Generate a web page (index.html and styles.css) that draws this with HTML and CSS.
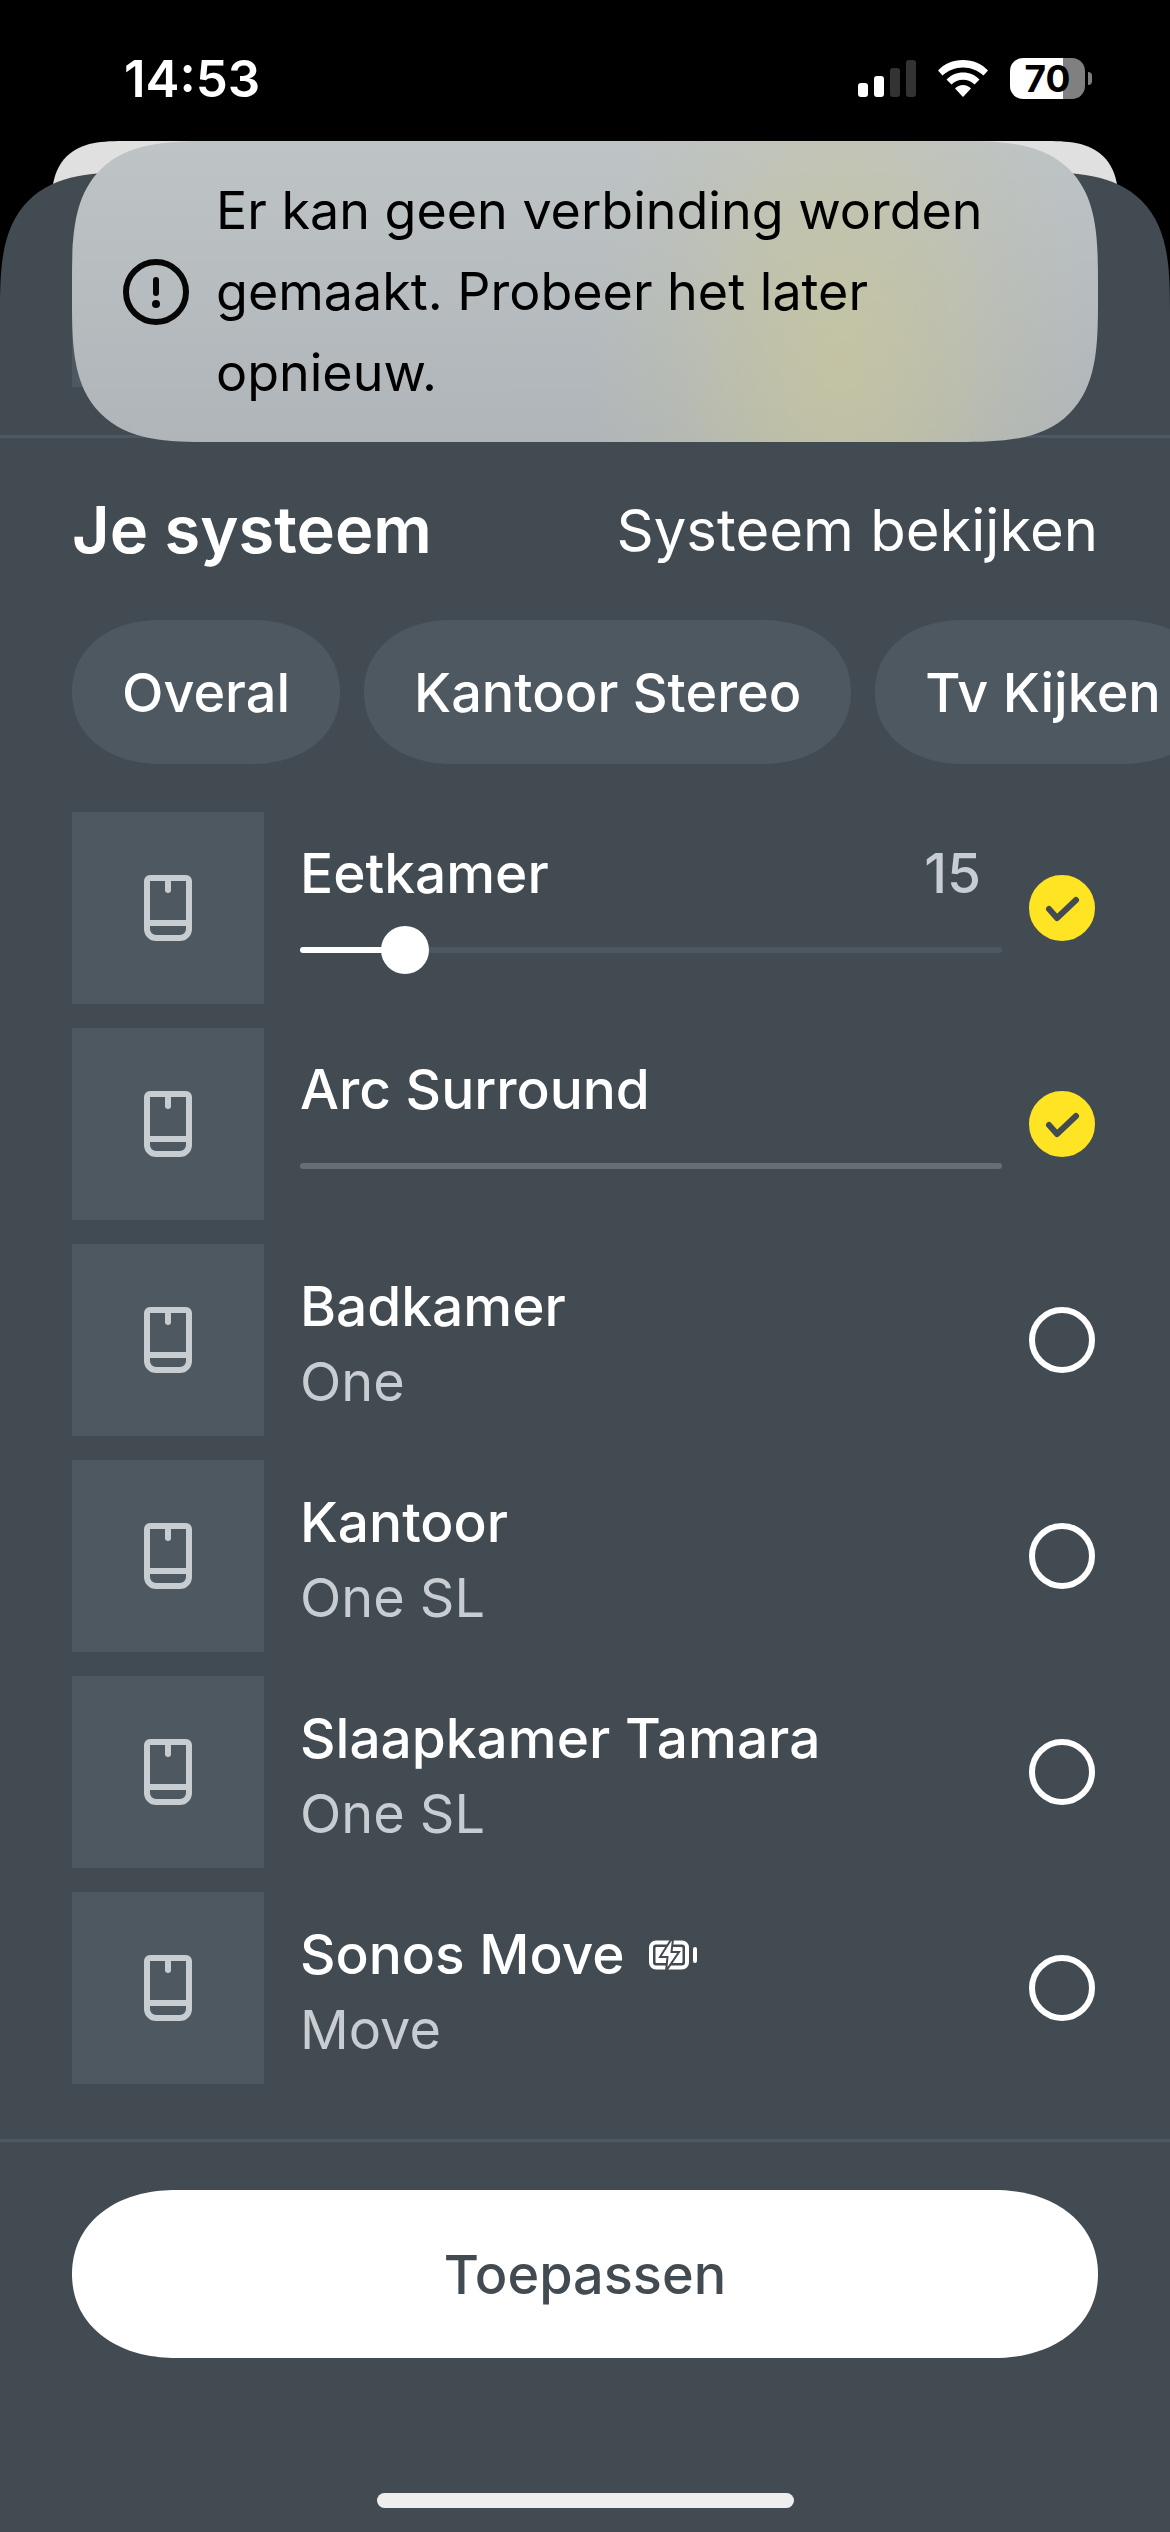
FILE: index.html
```html
<!DOCTYPE html>
<html lang="nl">
<head>
  <meta charset="UTF-8">
  <meta name="viewport" content="width=device-width, initial-scale=1.0">
  <title>Je systeem</title>
  <link rel="stylesheet" href="styles.css">
</head>
<body>
  <!-- shared icons -->
  <svg class="sprite" aria-hidden="true">
    <symbol id="speaker" viewBox="0 0 48 66">
      <path d="M6 3h36a3 3 0 0 1 3 3v48a9 9 0 0 1-9 9H12a9 9 0 0 1-9-9V6a3 3 0 0 1 3-3zM3 48h42" fill="none" stroke="currentColor" stroke-width="6"/>
      <path d="M24 5v10" fill="none" stroke="currentColor" stroke-width="6" stroke-linecap="round"/>
    </symbol>
    <symbol id="check" viewBox="0 0 66 66">
      <path d="M20 34l8 9 19-18" fill="none" stroke="currentColor" stroke-width="6" stroke-linecap="round" stroke-linejoin="round"/>
    </symbol>
  </svg>

  <div class="status-bar">
    <time class="clock">14:53</time>
    <div class="status-icons">
      <svg width="58" height="37" viewBox="0 0 58 37" fill="#fff">
        <rect x="0" y="23" width="10" height="14" rx="3"/>
        <rect x="16" y="16" width="10" height="21" rx="3"/>
        <rect x="32" y="8" width="10" height="29" rx="3" fill="#333"/>
        <rect x="48" y="0" width="10" height="37" rx="3" fill="#333"/>
      </svg>
      <svg width="50" height="37" viewBox="0 0 50 37" fill="#fff">
        <path d="M25 0C35 0 44 4 50 10.500L45.500 15.500C40 10.500 33 7.500 25 7.500S10 10.500 4.500 15.500L0 10.500C6 4 15 0 25 0z"/>
        <path d="M25 12.500C31.500 12.500 37 15 41.500 19.500L36.500 24.500C33.500 21.500 29.500 19.800 25 19.800S16.500 21.500 13.500 24.500L8.500 19.500C13 15 18.500 12.500 25 12.500z"/>
        <path d="M25 25C28 25 31 26.200 33 28.500L25 37L17 28.500C19 26.200 22 25 25 25z"/>
      </svg>
      <div class="battery"><span>70</span></div>
    </div>
  </div>

  <main class="stack">
    <div class="toast" role="alert">
      <svg class="toast-icon" width="66" height="66" viewBox="0 0 66 66" fill="none" stroke="#070707" stroke-width="6" stroke-linecap="round">
        <circle cx="33" cy="33" r="30"/>
        <path d="M33 21v13"/>
        <circle cx="33" cy="45" r="4" fill="#070707" stroke="none"/>
      </svg>
      <p>Er kan geen verbinding worden gemaakt. Probeer het later opnieuw.</p>
    </div>

    <div class="sheet">
      <div class="now-playing">
        <div class="cover"></div>
      </div>

      <section class="system">
        <div class="system-head">
          <h1>Je systeem</h1>
          <a href="#">Systeem bekijken</a>
        </div>

        <div class="chips">
          <button>Overal</button>
          <button>Kantoor Stereo</button>
          <button>Tv Kijken</button>
        </div>

        <ul class="rooms">
          <li class="room">
            <div class="tile"><svg><use href="#speaker"/></svg></div>
            <div class="room-volume">
              <div class="room-line">
                <label class="room-name" for="room-1">Eetkamer</label>
                <span class="level">15</span>
              </div>
              <div class="slider" style="--level: 15%">
                <input type="range" min="0" max="100" value="15" aria-label="Volume Eetkamer">
              </div>
            </div>
            <span class="check"><input type="checkbox" id="room-1" checked><svg><use href="#check"/></svg></span>
          </li>
          <li class="room">
            <div class="tile"><svg><use href="#speaker"/></svg></div>
            <div class="room-volume">
              <div class="room-line">
                <label class="room-name" for="room-2">Arc Surround</label>
              </div>
              <div class="slider off">
                <input type="range" min="0" max="100" value="0" aria-label="Volume Arc Surround" disabled>
              </div>
            </div>
            <span class="check"><input type="checkbox" id="room-2" checked><svg><use href="#check"/></svg></span>
          </li>
          <li class="room">
            <div class="tile"><svg><use href="#speaker"/></svg></div>
            <div class="room-info">
              <label class="room-name" for="room-3">Badkamer</label>
              <span class="model">One</span>
            </div>
            <span class="check"><input type="checkbox" id="room-3"></span>
          </li>
          <li class="room">
            <div class="tile"><svg><use href="#speaker"/></svg></div>
            <div class="room-info">
              <label class="room-name" for="room-4">Kantoor</label>
              <span class="model">One SL</span>
            </div>
            <span class="check"><input type="checkbox" id="room-4"></span>
          </li>
          <li class="room">
            <div class="tile"><svg><use href="#speaker"/></svg></div>
            <div class="room-info">
              <label class="room-name" for="room-5">Slaapkamer Tamara</label>
              <span class="model">One SL</span>
            </div>
            <span class="check"><input type="checkbox" id="room-5"></span>
          </li>
          <li class="room">
            <div class="tile"><svg><use href="#speaker"/></svg></div>
            <div class="room-info">
              <div class="name-line">
                <label class="room-name" for="room-6">Sonos Move</label>
                <svg width="48" height="30" viewBox="0 0 48 30">
                  <rect x="2" y="2.500" width="36" height="25" rx="5" fill="none" stroke="#fff" stroke-width="4"/>
                  <rect x="6" y="6.500" width="28" height="17" rx="1" fill="#fff"/>
                  <rect x="5.500" y="6" width="29" height="18" rx="2" fill="none" stroke="#434b52" stroke-width="2"/>
                  <path d="M22.500-1L11 17h7.500L17 31 30 12h-7.500L24-1z" fill="#fff" stroke="#434b52" stroke-width="2"/>
                  <rect x="44" y="7" width="4" height="16" rx="2" fill="#fff"/>
                </svg>
              </div>
              <span class="model">Move</span>
            </div>
            <span class="check"><input type="checkbox" id="room-6"></span>
          </li>
        </ul>
      </section>

      <footer class="actions">
        <button class="apply">Toepassen</button>
        <div class="home-indicator"></div>
      </footer>
    </div>
  </main>
</body>
</html>
```
FILE: styles.css
```css
* {
  box-sizing: border-box;
}

body {
  margin: 0;
  min-height: 100vh;
  display: flex;
  flex-direction: column;
  background-color: #000;
  color: #fff;
  font-family: Inter, "Liberation Sans", sans-serif;
  font-size: 55px;
  line-height: 75px;
  overflow-x: hidden;
}

h1, p, ul {
  margin: 0;
  padding: 0;
}

button, input {
  -webkit-appearance: none;
  appearance: none;
  margin: 0;
  border: none;
  font: inherit;
}

.sprite {
  display: none;
}

/* status bar */
.status-bar {
  display: flex;
  justify-content: space-between;
  align-items: center;
  height: 141px;
  padding: 15px 78px 0 124px;
}

.clock {
  font-size: 51px;
  font-weight: 600;
}

.status-icons {
  display: flex;
  align-items: center;
  gap: 22px;
}

.battery {
  position: relative;
  width: 75px;
  height: 41px;
  margin-right: 7px;
  border-radius: 13px;
  background: linear-gradient(to right, #fff 53px, #808080 53px);
  color: #000;
  font-size: 37px;
  font-weight: 700;
  line-height: 41px;
  text-align: center;
}

.battery::after {
  content: "";
  position: absolute;
  left: 78px;
  top: 14px;
  width: 4px;
  height: 13px;
  border-radius: 0 4px 4px 0;
  background-color: #808080;
}

/* sheets */
.stack {
  position: relative;
  flex: 1;
  display: flex;
  flex-direction: column;
  padding-top: 31px;
}

.stack::before {
  content: "";
  position: absolute;
  top: 0;
  left: 51px;
  right: 51px;
  height: 120px;
  border-radius: 56px 56px 0 0;
  background-color: #e0e0e0;
}

.sheet {
  position: relative;
  flex: 1;
  display: flex;
  flex-direction: column;
  border-radius: 96px 96px 0 0;
  background-color: #434b52;
}

.now-playing {
  padding: 71px 72px 48px;
  border-bottom: 3px solid #4e5860;
}

.cover {
  width: 144px;
  height: 144px;
  background-color: #4e5860;
}

/* toast lies over the top of the sheet */
.toast {
  position: absolute;
  z-index: 1;
  top: 0;
  left: 72px;
  right: 72px;
  display: flex;
  align-items: center;
  gap: 27px;
  padding: 29px 51px;
  border-radius: 96px;
  background:
    radial-gradient(ellipse 250px 400px at 75% 72%, rgba(203, 200, 150, 0.65), rgba(203, 200, 150, 0.5) 30%, rgba(203, 200, 150, 0.2) 65%, rgba(203, 200, 150, 0)),
    linear-gradient(#bec3c6, #b0b5b9);
  color: #000;
  font-size: 52px;
  line-height: 81px;
}

.toast-icon {
  flex: none;
}

/* system */
.system-head {
  display: flex;
  justify-content: space-between;
  align-items: center;
  padding: 52px 72px 50px;
  line-height: 80px;
}

.system-head h1 {
  font-size: 65px;
  font-weight: 600;
}

.system-head a {
  color: #fff;
  font-size: 58px;
  text-decoration: none;
}

.chips {
  display: flex;
  gap: 24px;
  padding: 0 72px;
  overflow: hidden;
}

.chips button {
  flex: none;
  height: 144px;
  padding: 0 50px;
  border-radius: 72px;
  background-color: #4e5860;
  color: #fff;
  font-size: 54px;
  font-weight: 500;
}

.rooms {
  display: flex;
  flex-direction: column;
  gap: 24px;
  padding: 48px 75px 55px 72px;
  list-style: none;
}

.room {
  display: flex;
  align-items: center;
}

.tile {
  flex: none;
  display: flex;
  align-items: center;
  justify-content: center;
  width: 192px;
  height: 192px;
  background-color: #4e5860;
  color: #c8cdd2;
}

.tile svg {
  width: 48px;
  height: 66px;
}

.room-name {
  font-weight: 500;
}

.room-info {
  flex: 1;
  display: flex;
  flex-direction: column;
  padding: 8px 0 0 36px;
}

.name-line {
  display: flex;
  align-items: center;
  gap: 24px;
}

.model {
  color: #c8cdd2;
  font-size: 54px;
}

.room-volume {
  flex: 1;
  display: flex;
  flex-direction: column;
  gap: 36px;
  margin: 0 27px 0 36px;
  padding-bottom: 27px;
}

.room-line {
  display: flex;
  justify-content: space-between;
  padding-right: 21px;
}

.level {
  color: #c8cdd2;
  font-weight: 500;
}

.slider {
  display: flex;
  align-items: center;
  height: 6px;
  border-radius: 3px;
  background: linear-gradient(to right, #fff var(--level), #4e5860 var(--level));
}

.slider.off {
  background: #666e75;
}

/* wider than the track so the thumb's center follows the value */
.slider input {
  flex: none;
  width: calc(100% + 48px);
  height: 48px;
  margin: 0 -24px;
  background: none;
}

.slider input::-webkit-slider-thumb {
  -webkit-appearance: none;
  width: 48px;
  height: 48px;
  border-radius: 50%;
  background-color: #fff;
}

.slider.off input::-webkit-slider-thumb {
  visibility: hidden;
}

.check {
  flex: none;
  display: grid;
}

.check input, .check svg {
  grid-area: 1 / 1;
  width: 66px;
  height: 66px;
}

.check input {
  border: 6px solid #fff;
  border-radius: 50%;
}

.check input:checked {
  border-color: #ffe424;
  background-color: #ffe424;
}

.check svg {
  color: #434b52;
  pointer-events: none;
}

/* bottom */
.actions {
  flex: 1;
  display: flex;
  flex-direction: column;
  align-items: center;
  justify-content: space-between;
  padding: 48px 72px 24px;
  border-top: 3px solid #4e5860;
}

.apply {
  width: 100%;
  height: 168px;
  border-radius: 84px;
  background-color: #fff;
  color: #434b52;
  font-size: 54px;
  font-weight: 500;
}

.home-indicator {
  width: 417px;
  max-width: 100%;
  height: 15px;
  border-radius: 8px;
  background-color: #eee;
}

/* smoother corners where the browser has them */
@supports (corner-shape: superellipse(1.6)) {
  .toast {
    border-radius: 140px;
    corner-shape: superellipse(1.6);
  }

  .sheet {
    border-radius: 140px 140px 0 0;
    corner-shape: superellipse(1.6);
  }

  .stack::before {
    border-radius: 76px 76px 0 0;
    corner-shape: superellipse(1.6);
  }

  .chips button {
    border-radius: 88px / 72px;
    corner-shape: superellipse(1.1);
  }

  .apply {
    border-radius: 104px / 84px;
    corner-shape: superellipse(1.1);
  }
}
```
